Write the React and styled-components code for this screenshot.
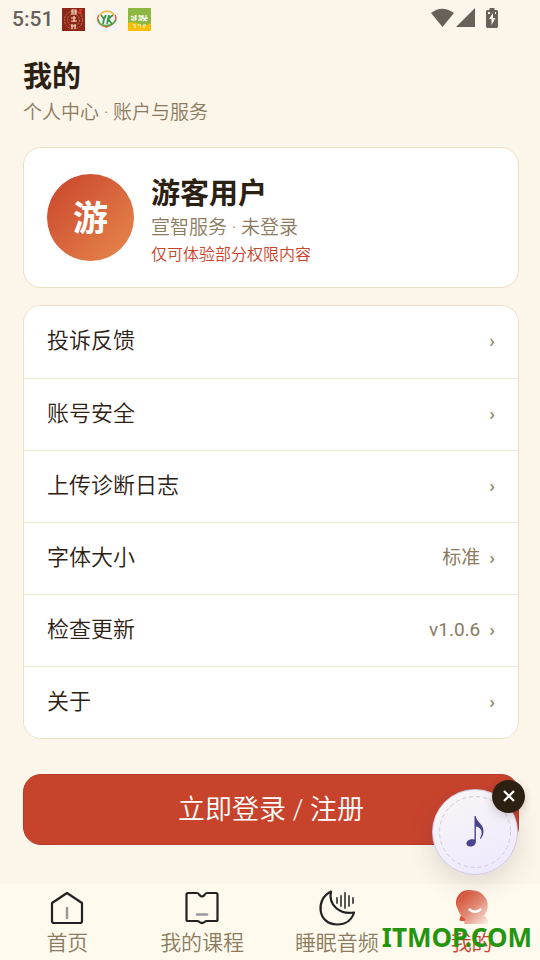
import React from "react";
import styled, { createGlobalStyle } from "styled-components";

const GlobalStyle = createGlobalStyle`
  *, *::before, *::after { box-sizing: border-box; }
  body {
    margin: 0;
    background: #fcf5e9;
    color: #2c2013;
    font-family: Roboto, "Noto Sans CJK SC", sans-serif;
    font-weight: 350;
  }
  button { font: inherit; color: inherit; margin: 0; cursor: pointer; }
`;

const Screen = styled.div`
  position: relative;
  min-height: 100vh;
  display: flex;
  flex-direction: column;
`;

const StatusBar = styled.header`
  display: flex;
  align-items: center;
  height: 38px;
  padding: 0 42px 0 12px;
  color: #666159;
`;

const Clock = styled.time`
  font-size: 21px;
  line-height: 24px;
  font-weight: 500;
  width: 50px;
`;

const StatusGroup = styled.div`
  display: flex;
  align-items: center;
  gap: ${({ $gap }) => $gap}px;
  margin-left: ${({ $end }) => ($end ? "auto" : "0")};
  margin-bottom: ${({ $end }) => ($end ? "3px" : "0")};
`;

const BatterySlot = styled.span`
  display: flex;
  padding-left: 9px;
`;

const Content = styled.main`
  display: flex;
  flex-direction: column;
  padding: 21px 21px 39px 23px;
`;

const Title = styled.h1`
  margin: 0;
  font-size: 29px;
  line-height: 36px;
  font-weight: 700;
`;

const Subtitle = styled.p`
  margin: 4px 0 0;
  font-size: 19px;
  line-height: 28px;
  color: #8b7a5e;
`;

const Card = styled.section`
  background: #fff;
  border: 1px solid #ebdfc5;
  border-radius: 18px;
  overflow: hidden;
`;

const ProfileCard = styled(Card)`
  display: flex;
  align-items: center;
  gap: 17px;
  margin: 20px 0 17px;
  padding: 26px 23px;
`;

const Avatar = styled.div`
  flex: none;
  display: grid;
  place-items: center;
  width: 87px;
  height: 87px;
  padding-top: 4px;
  border-radius: 50%;
  background: linear-gradient(135deg, #c8432c, #e8894d);
  color: #fff;
  font-size: 35px;
  line-height: 40px;
  font-weight: 700;
`;

const ProfileText = styled.div`
  height: 87px;
`;

const Name = styled.h2`
  margin: 0;
  font-size: 29px;
  line-height: 40px;
  font-weight: 700;
`;

const Meta = styled.p`
  margin: 0;
  font-size: 19px;
  line-height: 28px;
  color: #8b7a5e;
`;

const Notice = styled.p`
  margin: 0;
  font-size: 16px;
  line-height: 26px;
  color: #c8432c;
`;

const MenuRow = styled.button`
  display: flex;
  align-items: center;
  width: 100%;
  height: 72px;
  padding: 0 23px 2px;
  border: 0;
  background: #fff;
  text-align: left;

  & + & { border-top: 1px solid #f0e6cf; }
`;

const MenuLabel = styled.span`
  flex: 1;
  font-size: 22px;
  line-height: 30px;
`;

const MenuValue = styled.span`
  margin-right: 9px;
  font-size: 19px;
  line-height: 26px;
  font-weight: 400;
  color: #8b7a5e;
`;

const Chevron = styled.span`
  font-size: 19px;
  line-height: 26px;
  font-weight: 400;
  color: #8b7a5e;
`;

const LoginButton = styled.button`
  height: 71px;
  margin-top: 35px;
  padding: 0;
  border: 1px solid #b63c27;
  border-radius: 18px;
  background: #c8432c;
  color: #fff;
  font-size: 27px;
  line-height: 36px;
`;

const MusicWidget = styled.div`
  position: absolute;
  right: 22px;
  bottom: 86px;
  width: 86px;
  height: 86px;
`;

const MusicButton = styled.button`
  display: block;
  width: 86px;
  height: 86px;
  padding: 0;
  border: 1px solid #cfc8e5;
  border-radius: 50%;
  background: linear-gradient(155deg, #faf6f5, #ece8ff);
  box-shadow: 0 8px 26px rgba(60, 60, 70, 0.16);
`;

const CloseButton = styled.button`
  position: absolute;
  top: -9px;
  right: -7px;
  display: grid;
  place-items: center;
  width: 33px;
  height: 33px;
  padding: 0 0 2px;
  border: 0;
  border-radius: 50%;
  background: #2c2013;
  box-shadow: 0 3px 10px rgba(44, 32, 19, 0.2);
`;

const TabBar = styled.nav`
  position: relative;
  display: grid;
  grid-template-columns: repeat(4, 1fr);
  height: 77px;
  margin-top: auto;
  padding-right: 1px;
  background: #fffaee;
`;

const Tab = styled.button`
  display: flex;
  flex-direction: column;
  align-items: center;
  padding: 4px 0 0;
  border: 0;
  background: none;
  color: ${({ $active }) => ($active ? "#c8432c" : "#8b7a5e")};
  font-size: 21px;
  line-height: 30px;

  svg { flex: none; }
`;

const Watermark = styled.div`
  position: absolute;
  right: 8px;
  bottom: 6px;
  color: #259510;
  font-family: "Noto Sans", sans-serif;
  font-size: 26px;
  line-height: 36px;
  font-weight: 700;
  pointer-events: none;
`;

const RedAppIcon = () => (
  <svg width="23" height="23" viewBox="0 0 23 23" aria-hidden="true">
    <rect width="23" height="23" fill="#8e2519" />
    <g fill="none" stroke="#bd7553" strokeWidth="1">
      <circle cx="11.5" cy="12" r="9" strokeDasharray="2 1" />
      <circle cx="11.5" cy="12" r="6" strokeDasharray="2 1" />
    </g>
    <path d="M10 2h4v4h-4zM10 4h4M9 10h5M12 8v6M9 13h6M10 16v5M13 16v5M9 18h5" fill="none" stroke="#f4dfc3" strokeWidth="1.2" />
    <path d="M17 2h3M18 2v4M16 5h4" stroke="#e33a2d" strokeWidth="1.5" />
  </svg>
);

const RingAppIcon = () => (
  <svg width="23" height="23" viewBox="0 0 23 23" aria-hidden="true">
    <rect width="23" height="23" fill="#f4f4f6" />
    <g fill="none" strokeWidth="1.500">
      <path d="M5 7C8 2 16 2 19 7" stroke="#f1b928" />
      <path d="M4 7c-4 6 1 11 8 12" stroke="#ea7032" />
      <path d="M20 7c3 6-3 11-9 12" stroke="#e45a35" />
      <path d="M3 11c1 8 13 9 18 1" stroke="#55ac48" />
      <path d="M6 7l3 4 2-4M9 11l-1 5M14 7l-2 9M18 7l-5 4 4 5" stroke="#3c9745" strokeWidth="1.800" />
    </g>
  </svg>
);

const GreenAppIcon = () => (
  <svg width="23" height="23" viewBox="0 0 23 23" aria-hidden="true">
    <rect width="23" height="23" fill="#8fb842" />
    <path d="M0 15q5-2 11 1t12-1v8H0z" fill="#f8bf08" />
    <path d="M3 8l1 1M3 12l1-1M5 8v5M7 7v6M8 7v5M10 8h4v4h-4M12 7v5M15 7v3M18 7v3M14 10h6M15 13l4-3M15 10l4 3M5 17h3M10 17h3M15 17h3M6 19h2M12 19h1M15 19h2" fill="none" stroke="#fff" strokeWidth="1.100" />
  </svg>
);

const WifiIcon = () => (
  <svg width="24" height="20" viewBox="0 0 24 20" fill="#666159" aria-hidden="true">
    <path d="M1 5Q12-3.500 24 5L12.500 19z" />
  </svg>
);

const SignalIcon = () => (
  <svg width="19" height="20" viewBox="0 0 19 20" fill="#666159" aria-hidden="true">
    <path d="M19 0v19H0z" />
  </svg>
);

const BatteryIcon = () => (
  <svg width="12" height="20" viewBox="0 0 12 20" aria-hidden="true">
    <path d="M3.500 0h5v2H11l1 1v16l-1 1H1l-1-1V3l1-1h2.500z" fill="#666159" />
    <path d="M7 5L3 11h2.500v6L9.500 10H7zM2 4h2v2H2zM9 4h1v2H9z" fill="#fcf5e9" />
  </svg>
);

const NoteIcon = () => (
  <svg width="84" height="84" viewBox="0 0 84 84" aria-hidden="true">
    <circle cx="42" cy="42" r="35.5" fill="none" stroke="#cfcbd9" strokeDasharray="4 3" />
    <path d="M41.500 26h1.200c.8 6 7.800 8 7.800 15 0 3-1 6-3 8l-.6-.5c4-7 .8-11-4-12v15c0 3-2.500 5-5.500 5-2.400 0-4-1.200-4-3 0-2.600 3.600-5 8.100-4z" fill="#48458d" />
  </svg>
);

const CloseIcon = () => (
  <svg width="12" height="12" viewBox="0 0 12 12" stroke="#fff" strokeWidth="2.200" aria-hidden="true">
    <path d="M1 1l10 10M11 1L1 11" />
  </svg>
);

const HomeIcon = () => (
  <svg width="40" height="40" viewBox="0 0 40 40" fill="none" strokeLinejoin="round" strokeLinecap="round" aria-hidden="true">
    <path d="M20 5L35 15V33q0 2-2 2H7q-2 0-2-2V15z" stroke="#222" strokeWidth="2.200" />
    <path d="M20 20v10" stroke="#999" strokeWidth="2.500" />
  </svg>
);

const CourseIcon = () => (
  <svg width="40" height="40" viewBox="0 0 40 40" fill="none" strokeLinejoin="round" strokeLinecap="round" aria-hidden="true">
    <path d="M6 5h9q1.500 0 2.500 2 2.500 3 5 0 1-2 2.500-2h9q1.500 0 1.500 1.500v25q0 1.500-1.500 1.500H25q-1.500 0-2.500 1-2.500 2-5 0-1-1-2.500-1H6q-1.500 0-1.500-1.500v-25Q4.500 5 6 5z" stroke="#222" strokeWidth="2.200" />
    <path d="M15 26.500h10" stroke="#999" strokeWidth="2.500" />
  </svg>
);

const SleepIcon = () => (
  <svg width="40" height="40" viewBox="0 0 40 40" fill="none" strokeLinejoin="round" strokeLinecap="round" aria-hidden="true">
    <path d="M14 3.500C-2 11 .5 36.500 20 36.500c9 0 15-5 17-12C23 27 11 17 14 3.500z" stroke="#222" strokeWidth="2.200" />
    <path d="M20 10v5M24 8v10M28 5v15M32 8v10M36 10v5" stroke="#444" strokeWidth="1.800" />
  </svg>
);

const ProfileIcon = () => (
  <svg width="40" height="40" viewBox="0 0 40 40" fill="none" aria-hidden="true">
    <defs>
      <linearGradient id="profile-front" x1="8" y1="8" x2="34" y2="35" gradientUnits="userSpaceOnUse">
        <stop stopColor="#d65339" />
        <stop offset=".5" stopColor="#e28c78" />
        <stop offset="1" stopColor="#fae6da" />
      </linearGradient>
    </defs>
    <circle cx="16.500" cy="14.500" r="12.500" fill="#d14e36" />
    <path d="M12 25c-2 0-4 4-4.500 6-.3 1.500.5 2 2 2h5z" fill="#dc563c" />
    <circle cx="20.500" cy="17.500" r="15" fill="url(#profile-front)" stroke="#ee9b83" strokeOpacity=".45" />
    <path d="M15 28h17c3 1 4 4 4 6 0 1.500-.8 2-2 2H14c-1.500 0-2.200-1-1.800-2z" fill="url(#profile-front)" />
    <path d="M17.500 21.500q5.500 4.500 11 0" stroke="#fff" strokeWidth="2.300" strokeLinecap="round" />
  </svg>
);

const menuItems = [
  { label: "投诉反馈" },
  { label: "账号安全" },
  { label: "上传诊断日志" },
  { label: "字体大小", value: "标准" },
  { label: "检查更新", value: "v1.0.6" },
  { label: "关于" },
];

const tabs = [
  { label: "首页", Icon: HomeIcon },
  { label: "我的课程", Icon: CourseIcon },
  { label: "睡眠音频", Icon: SleepIcon },
  { label: "我的", Icon: ProfileIcon, active: true },
];

export default function App() {
  return (
    <>
      <GlobalStyle />
      <Screen>
        <StatusBar>
          <Clock>5:51</Clock>
          <StatusGroup $gap={10}>
            <RedAppIcon />
            <RingAppIcon />
            <GreenAppIcon />
          </StatusGroup>
          <StatusGroup $gap={2} $end>
            <WifiIcon />
            <SignalIcon />
            <BatterySlot>
              <BatteryIcon />
            </BatterySlot>
          </StatusGroup>
        </StatusBar>

        <Content>
          <Title>我的</Title>
          <Subtitle>个人中心 · 账户与服务</Subtitle>

          <ProfileCard>
            <Avatar>游</Avatar>
            <ProfileText>
              <Name>游客用户</Name>
              <Meta>宣智服务 · 未登录</Meta>
              <Notice>仅可体验部分权限内容</Notice>
            </ProfileText>
          </ProfileCard>

          <Card>
            {menuItems.map(({ label, value }) => (
              <MenuRow key={label} type="button">
                <MenuLabel>{label}</MenuLabel>
                {value && <MenuValue>{value}</MenuValue>}
                <Chevron aria-hidden="true">›</Chevron>
              </MenuRow>
            ))}
          </Card>

          <LoginButton type="button">立即登录 / 注册</LoginButton>
        </Content>

        <TabBar>
          {tabs.map(({ label, Icon, active }) => (
            <Tab key={label} type="button" $active={active} aria-current={active ? "page" : undefined}>
              <Icon />
              {label}
            </Tab>
          ))}
          <Watermark>ITMOP.COM</Watermark>
        </TabBar>

        <MusicWidget>
          <MusicButton type="button" aria-label="播放音乐">
            <NoteIcon />
          </MusicButton>
          <CloseButton type="button" aria-label="关闭">
            <CloseIcon />
          </CloseButton>
        </MusicWidget>
      </Screen>
    </>
  );
}
